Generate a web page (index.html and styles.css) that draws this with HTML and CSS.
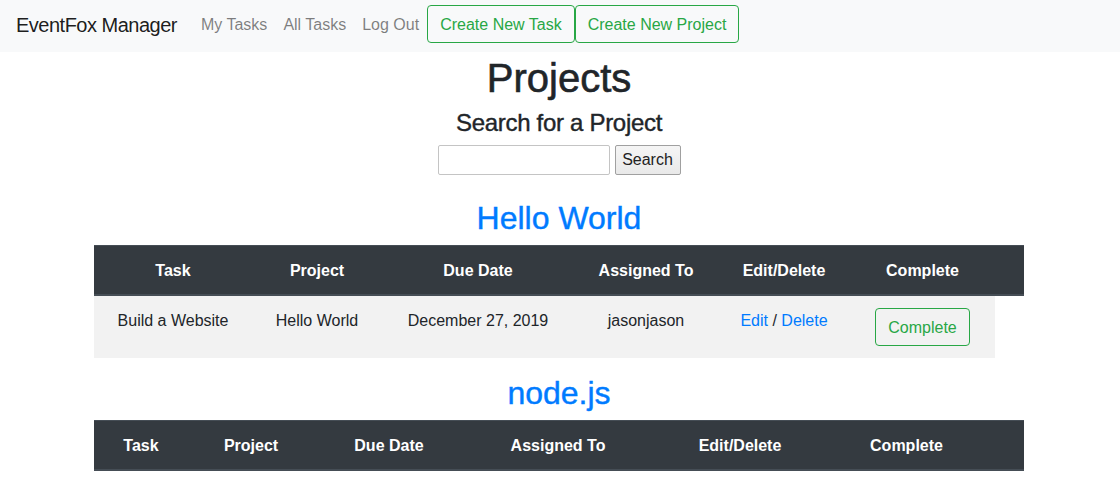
FILE: index.html
```html
<!DOCTYPE html>
<html lang="en">
<head>
<meta charset="utf-8">
<title>EventFox Manager</title>
<link rel="stylesheet" href="styles.css">
</head>
<body>
<nav class="navbar">
  <a class="brand" href="#">EventFox Manager</a>
  <a class="nav-link" href="#">My Tasks</a>
  <a class="nav-link" href="#">All Tasks</a>
  <a class="nav-link" href="#">Log Out</a>
  <a class="btn btn-outline" href="#">Create New Task</a>
  <a class="btn btn-outline" href="#">Create New Project</a>
</nav>
<main class="container">
  <h1 class="title">Projects</h1>
  <h4 class="subtitle">Search for a Project</h4>
  <form class="search">
    <input class="search-input" type="text">
    <button class="search-btn" type="button">Search</button>
  </form>

  <h2 class="project-name"><a href="#">Hello World</a></h2>
  <table class="table t1">
    <colgroup>
      <col class="a1"><col class="a2"><col class="a3"><col class="a4"><col class="a5"><col class="a6"><col class="a7">
    </colgroup>
    <thead>
      <tr><th>Task</th><th>Project</th><th>Due Date</th><th>Assigned To</th><th>Edit/Delete</th><th>Complete</th><th></th></tr>
    </thead>
    <tbody>
      <tr class="striped">
        <td>Build a Website</td>
        <td>Hello World</td>
        <td>December 27, 2019</td>
        <td>jasonjason</td>
        <td><a href="#">Edit</a> / <a href="#">Delete</a></td>
        <td><button class="btn btn-outline" type="button">Complete</button></td>
      </tr>
    </tbody>
  </table>

  <h2 class="project-name"><a href="#">node.js</a></h2>
  <table class="table t2">
    <colgroup>
      <col class="b1"><col class="b2"><col class="b3"><col class="b4"><col class="b5"><col class="b6"><col class="b7">
    </colgroup>
    <thead>
      <tr><th>Task</th><th>Project</th><th>Due Date</th><th>Assigned To</th><th>Edit/Delete</th><th>Complete</th><th></th></tr>
    </thead>
    <tbody></tbody>
  </table>
</main>
</body>
</html>
```

FILE: styles.css
```css
* { box-sizing: border-box; }
html, body { margin: 0; padding: 0; }
body {
  font-family: "Liberation Sans", Arial, sans-serif;
  font-size: 16px;
  line-height: 1.5;
  color: #212529;
  background: #fff;
}
a { text-decoration: none; color: #007bff; }

.navbar {
  display: flex;
  align-items: center;
  height: 52px;
  padding: 4px 16px 8px;
  background: #f8f9fa;
}
.brand {
  font-size: 20px;
  line-height: 30px;
  padding: 6px 0 4px;
  margin-right: 16px;
  color: rgba(0,0,0,.9);
  letter-spacing: -0.5px;
}
.nav-link {
  padding: 9px 8px 7px;
  line-height: 24px;
  color: rgba(0,0,0,.5);
}
.btn {
  display: inline-block;
  font-family: inherit;
  font-size: 16px;
  line-height: 24px;
  padding: 7px 12px 5px;
  border-radius: 4px;
  background: transparent;
  cursor: pointer;
}
.btn-outline {
  color: #28a745;
  border: 1px solid #28a745;
}

.container {
  width: 932px;
  padding-right: 2px;
  margin: 0 auto;
  text-align: center;
}
.title {
  margin: 0 0 6px;
  padding-top: 2px;
  font-size: 40px;
  line-height: 48px;
  font-weight: 500;
  -webkit-text-stroke: 0.6px #212529;
}
.subtitle {
  margin: 0 0 8px;
  font-size: 24px;
  line-height: 29px;
  font-weight: 500;
  letter-spacing: -0.3px;
  -webkit-text-stroke: 0.4px #212529;
}
.search {
  display: flex;
  justify-content: center;
  gap: 5px;
  margin: 0 0 24px;
}
.search-input {
  width: 172px;
  height: 30px;
  border: 1px solid #c4c4c4;
  border-radius: 2px;
  padding: 2px 4px;
  font-family: inherit;
  font-size: 16px;
}
.search-btn {
  width: 66px;
  height: 30px;
  border: 1px solid #a0a0a0;
  border-radius: 2px;
  background: linear-gradient(#f5f5f5, #e9e9e9);
  color: #222;
  font-family: inherit;
  font-size: 16px;
  padding: 0 6px;
}
.project-name {
  margin: 0 0 8px;
  font-size: 32px;
  line-height: 38px;
  font-weight: 500;
}
.project-name a { -webkit-text-stroke: 0.4px #007bff; }
.table {
  width: 930px;
  table-layout: fixed;
  border-collapse: collapse;
  margin-bottom: 16px;
}
.table th {
  background: #343a40;
  color: #fff;
  font-weight: bold;
  padding: 13px 12px 11px;
  line-height: 24px;
  border-top: 1px solid #454d55;
  border-bottom: 2px solid #454d55;
  vertical-align: bottom;
  white-space: nowrap;
}
.table td {
  padding: 13px 12px 12px;
  line-height: 24px;
  vertical-align: top;
  white-space: nowrap;
}
.table td .btn { margin-top: -1px; }
.striped { background: #f2f2f2; }

.a1 { width: 158px; } .a2 { width: 130px; } .a3 { width: 192px; }
.a4 { width: 144px; } .a5 { width: 132px; } .a6 { width: 145px; } .a7 { width: 29px; }
.b1 { width: 94px; } .b2 { width: 126px; } .b3 { width: 150px; }
.b4 { width: 188px; } .b5 { width: 176px; } .b6 { width: 157px; } .b7 { width: 39px; }
```
